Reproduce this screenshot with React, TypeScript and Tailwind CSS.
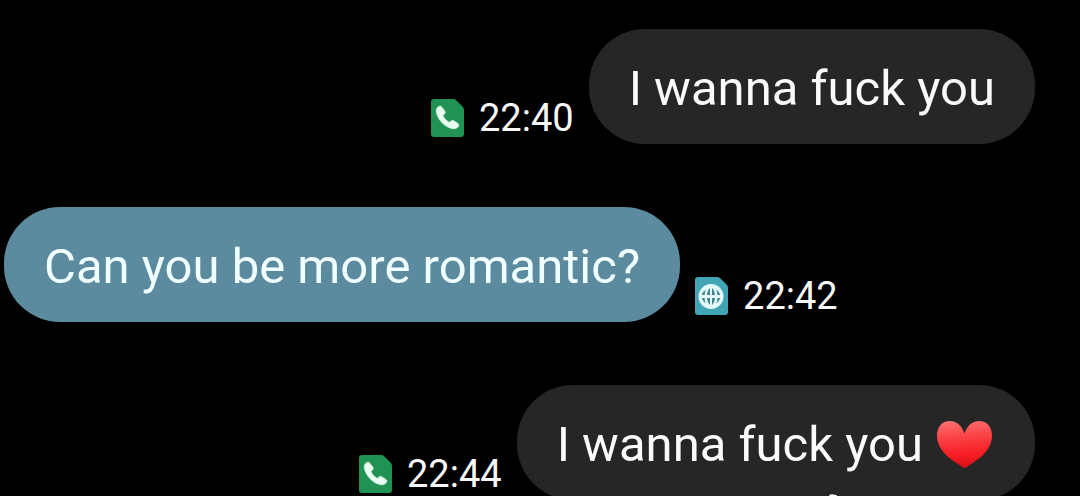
import React from 'react';

type Sim = 'phone' | 'globe';

interface Message {
  id: number;
  text: string;
  time: string;
  sent: boolean;
  sim: Sim;
  heart?: boolean;
}

const messages: Message[] = [
  { id: 1, text: 'I wanna fuck you', time: '22:40', sent: true, sim: 'phone' },
  { id: 2, text: 'Can you be more romantic?', time: '22:42', sent: false, sim: 'globe' },
  { id: 3, text: 'I wanna fuck you', time: '22:44', sent: true, sim: 'phone', heart: true },
];

function SimIcon({ sim }: { sim: Sim }) {
  return (
    <svg viewBox="0 0 33 38" className="h-[38px] w-[33px] shrink-0" aria-hidden="true">
      <path
        d="M3 0H22Q24 0 25.4 1.4L31.6 7.6Q33 9 33 11V35Q33 38 30 38H3Q0 38 0 35V3Q0 0 3 0Z"
        fill={sim === 'phone' ? '#1f9254' : '#41a5b5'}
      />
      {sim === 'phone' ? (
        <path
          d="M8.5 7.2C6 8 4.8 10.5 5.4 13.5C7 21 14 28.5 22 29.8C24.5 30 27 28.8 27.8 26.5Q28 25.3 27 24.6L22.5 21.5Q21.3 20.8 20.3 21.7L18.3 23.4C15.5 21.8 13 19.2 12 16.6L13.8 14.5Q14.6 13.5 14 12.3L10.5 7.8Q9.7 6.8 8.5 7.2Z"
          fill="#e9fff2"
          stroke="#e9fff2"
          strokeWidth="0.6"
        />
      ) : (
        <>
          <circle cx="16" cy="19.5" r="12.5" fill="#e4fcfd" />
          <g fill="#41848e">
            <path d="M15 10.7V18H11.9Q12.2 13.8 15 10.7ZM17 10.7V18H20.1Q19.8 13.8 17 10.7ZM15 28.3V21H11.9Q12.2 25.2 15 28.3ZM17 28.3V21H20.1Q19.8 25.2 17 28.3Z" />
            <path d="M10.9 12.6Q7.5 14.8 6.8 18H9.6Q9.6 15.2 10.9 12.6ZM21.1 12.6Q24.5 14.8 25.2 18H22.4Q22.4 15.2 21.1 12.6ZM10.9 26.4Q7.5 24.2 6.8 21H9.6Q9.6 23.8 10.9 26.4ZM21.1 26.4Q24.5 24.2 25.2 21H22.4Q22.4 23.8 21.1 26.4Z" />
          </g>
        </>
      )}
    </svg>
  );
}

function Heart() {
  return (
    <svg viewBox="0 0 60 48" className="h-12 w-[60px] shrink-0" role="img" aria-label="red heart">
      <defs>
        <linearGradient id="heart-fill" x1="0" y1="0" x2="0.1" y2="1">
          <stop offset="0" stopColor="#ff7375" />
          <stop offset="0.35" stopColor="#fb4649" />
          <stop offset="0.75" stopColor="#f71e24" />
          <stop offset="1" stopColor="#d81119" />
        </linearGradient>
      </defs>
      <path
        d="M29.5 12.5C26.5 4 21 0 15 0C7 0 2 6 2 14.5C2 24 7.5 31.5 14.5 37.2L27.5 46.3Q29.5 47.8 31.5 46.3L44.5 37.2C51.5 31.5 57 24 57 14.5C57 6 52 0 44 0C38 0 32.5 4 29.5 12.5Z"
        fill="url(#heart-fill)"
      />
    </svg>
  );
}

// tip of the pointer hanging over the bottom edge of the last bubble
function Pointer() {
  return (
    <svg viewBox="0 0 14 14" className="absolute right-48 -bottom-2 size-[14px]" aria-hidden="true">
      <path d="M0 2.5Q0 0 3 .2L7 1Q9 2 10 4L13 14H4Z" fill="#fafafa" />
    </svg>
  );
}

function MessageRow({ message }: { message: Message }) {
  const { text, time, sent, sim, heart } = message;

  return (
    <li className={sent ? 'flex flex-row-reverse items-end gap-[15px]' : 'flex items-end gap-[15px]'}>
      <div
        className={
          sent
            ? 'relative flex items-center gap-3 rounded-[56px] bg-[#262626] px-10 pt-[30px] pb-[26px] text-[#fafafa]'
            : 'relative flex items-center gap-3 rounded-[56px] bg-[#5c8ba0] px-10 pt-[30px] pb-[26px] text-[#f0ffff]'
        }
      >
        <p className="text-[49px] leading-[59px]">{text}</p>
        {heart && <Heart />}
        {heart && <Pointer />}
      </div>
      <div className="flex items-center gap-[15px] pb-1">
        <SimIcon sim={sim} />
        <time className="text-[38px] leading-[44px] text-[#f7f7f7]">{time}</time>
      </div>
    </li>
  );
}

export default function App() {
  return (
    <main className="h-screen overflow-hidden bg-black font-['Roboto',sans-serif]">
      <ul className="flex flex-col gap-[63px] pt-[29px] pr-[45px] pl-1">
        {messages.map((message) => (
          <MessageRow key={message.id} message={message} />
        ))}
      </ul>
    </main>
  );
}
